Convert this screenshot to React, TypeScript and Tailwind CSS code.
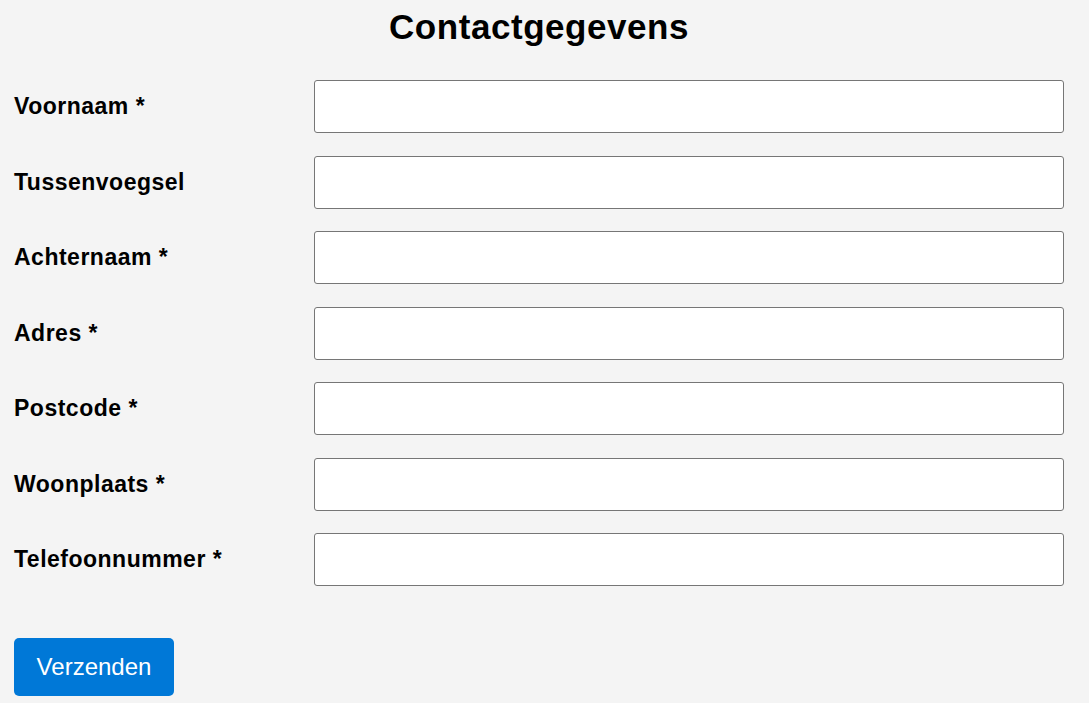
import { useState } from 'react';

const fields = [
  { name: 'voornaam', label: 'Voornaam *' },
  { name: 'tussenvoegsel', label: 'Tussenvoegsel' },
  { name: 'achternaam', label: 'Achternaam *' },
  { name: 'adres', label: 'Adres *' },
  { name: 'postcode', label: 'Postcode *' },
  { name: 'woonplaats', label: 'Woonplaats *' },
  { name: 'telefoon', label: 'Telefoonnummer *' },
];

export default function App() {
  const [values, setValues] = useState<Record<string, string>>({});

  return (
    <div className="min-h-screen bg-[#f4f4f4] font-['Liberation_Sans',Arial,sans-serif] text-black">
      <form
        className="w-[1050px] ml-[14px] pt-[7px] flex flex-col"
        onSubmit={(e) => e.preventDefault()}
      >
        <h1 className="text-center text-[35px] leading-[40px] font-bold tracking-[0.55px] mb-[33px]">
          Contactgegevens
        </h1>

        {fields.map((f) => (
          <div key={f.name} className="flex items-center mb-[22.5px]">
            <label
              htmlFor={f.name}
              className="w-[300px] shrink-0 text-[23px] font-bold tracking-[0.5px]"
            >
              {f.label}
            </label>
            <input
              id={f.name}
              type="text"
              value={values[f.name] ?? ''}
              onChange={(e) => setValues({ ...values, [f.name]: e.target.value })}
              className="flex-1 h-[53px] bg-white border border-[#767676] rounded-[3px] px-3 text-[18px] outline-none"
            />
          </div>
        ))}

        <div className="mt-[29.5px]">
          <button
            type="submit"
            className="w-[160px] h-[58px] bg-[#0078d7] text-white text-[24px] rounded-[5px]"
          >
            Verzenden
          </button>
        </div>
      </form>
    </div>
  );
}
